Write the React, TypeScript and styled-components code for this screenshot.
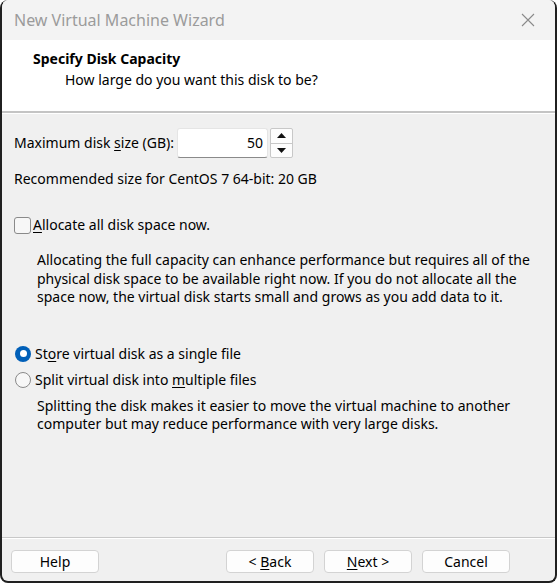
import styled, { createGlobalStyle } from "styled-components";

const Global = createGlobalStyle`
  html, body {
    margin: 0;
    padding: 0;
    background: #ffffff;
  }
  body {
    font-family: "Noto Sans", "Open Sans", sans-serif;
    font-size: 14px;
    color: #000;
  }
`;

const Window = styled.div`
  width: 553px;
  height: 581px;
  display: flex;
  flex-direction: column;
  background: #f0f0f0;
  border: 2px solid #202020;
  border-top: none;
  border-radius: 8px;
  overflow: hidden;
`;

const TitleBar = styled.div`
  height: 40px;
  flex: none;
  display: flex;
  align-items: center;
  justify-content: space-between;
  padding: 0 0 0 12px;
  background: #f3f3f3;
  color: #9b9b9b;
  font-size: 16px;
`;

const CloseBtn = styled.div`
  width: 46px;
  height: 40px;
  display: flex;
  align-items: center;
  justify-content: center;
  margin-right: 4px;
`;

const Header = styled.div`
  height: 73px;
  flex: none;
  background: #fff;
  border-bottom: 2px solid #c4c4c4;
  padding: 10px 0 0 31px;
  box-sizing: border-box;
`;

const HeadTitle = styled.div`
  font-weight: 700;
  font-size: 14px;
  line-height: 18px;
`;

const HeadSub = styled.div`
  margin: 3px 0 0 32px;
  line-height: 18px;
`;

const Content = styled.div`
  flex: 1;
  padding: 14px 12px 0 12px;
  display: flex;
  flex-direction: column;
  border-top: 1px solid #fff;
`;

const Row = styled.div<{ $mt?: number }>`
  display: flex;
  align-items: center;
  margin-top: ${(p) => p.$mt ?? 0}px;
  line-height: 18px;
`;

const Label = styled.span`
  width: 163px;
`;

const Spin = styled.div`
  display: flex;
  align-items: stretch;
  height: 30px;
`;

const NumBox = styled.div`
  width: 91px;
  box-sizing: border-box;
  background: #fff;
  border: 1px solid #e5e5e5;
  border-bottom: 1px solid #8a8a8a;
  border-radius: 3px;
  text-align: right;
  padding: 5px 4px 0 0;
`;

const Arrows = styled.div`
  display: flex;
  flex-direction: column;
  margin-left: 2px;
  width: 21px;
  border: 1px solid #c8c8c8;
  border-radius: 2px;
  background: #fdfdfd;
`;

const ArrowBtn = styled.div<{ $top?: boolean }>`
  flex: 1;
  display: flex;
  align-items: center;
  justify-content: center;
  border-bottom: ${(p) => (p.$top ? "1px solid #c8c8c8" : "none")};
`;

const Para = styled.div<{ $mt?: number }>`
  margin: ${(p) => p.$mt ?? 0}px 0 0 23px;
  line-height: 18.5px;
`;

const Check = styled.span`
  width: 15px;
  height: 15px;
  border: 1px solid #8a8a8a;
  border-radius: 3px;
  background: #f7f7f7;
  margin-right: 2px;
  flex: none;
`;

const Radio = styled.span<{ $on?: boolean }>`
  width: 16px;
  height: 16px;
  box-sizing: border-box;
  border-radius: 50%;
  flex: none;
  margin-right: 4px;
  margin-left: 1px;
  ${(p) =>
    p.$on
      ? `background: #005fb8; display:flex; align-items:center; justify-content:center;`
      : `border: 1px solid #8a8a8a; background: #f7f7f7;`}
`;

const Dot = styled.span`
  width: 7px;
  height: 7px;
  border-radius: 50%;
  background: #fff;
`;

const Footer = styled.div`
  flex: none;
  height: 44px;
  border-top: 1px solid #c8c8c8;
  box-shadow: inset 0 1px 0 #fff;
  display: flex;
  align-items: flex-start;
  padding: 12px 0 0 9px;
  box-sizing: border-box;
`;

const Button = styled.div<{ $ml?: number }>`
  width: 88px;
  height: 23px;
  box-sizing: border-box;
  margin-left: ${(p) => p.$ml ?? 0}px;
  background: #fdfdfd;
  border: 1px solid #d3d3d3;
  border-radius: 4px;
  display: flex;
  align-items: center;
  justify-content: center;
  font-size: 14px;
`;

const U = styled.span`
  text-decoration: underline;
  text-underline-offset: 2px;
`;

export default function App() {
  return (
    <>
      <Global />
      <Window>
        <TitleBar>
          <span>New Virtual Machine Wizard</span>
          <CloseBtn>
            <svg width="14" height="14" viewBox="0 0 14 14">
              <path d="M1 1L13 13M13 1L1 13" stroke="#8a8a8a" strokeWidth="1.1" />
            </svg>
          </CloseBtn>
        </TitleBar>
        <Header>
          <HeadTitle>Specify Disk Capacity</HeadTitle>
          <HeadSub>How large do you want this disk to be?</HeadSub>
        </Header>
        <Content>
          <Row>
            <Label>
              Maximum disk <U>s</U>ize (GB):
            </Label>
            <Spin>
              <NumBox>50</NumBox>
              <Arrows>
                <ArrowBtn $top>
                  <svg width="9" height="5" viewBox="0 0 9 5">
                    <path d="M0 5L4.5 0L9 5Z" fill="#111" />
                  </svg>
                </ArrowBtn>
                <ArrowBtn>
                  <svg width="9" height="5" viewBox="0 0 9 5">
                    <path d="M0 0L4.5 5L9 0Z" fill="#111" />
                  </svg>
                </ArrowBtn>
              </Arrows>
            </Spin>
          </Row>
          <Row $mt={12}>Recommended size for CentOS 7 64-bit: 20 GB</Row>
          <Row $mt={28}>
            <Check />
            <span>
              <U>A</U>llocate all disk space now.
            </span>
          </Row>
          <Para $mt={17}>
            Allocating the full capacity can enhance performance but requires all of the
            physical disk space to be available right now. If you do not allocate all the
            space now, the virtual disk starts small and grows as you add data to it.
          </Para>
          <Row $mt={38}>
            <Radio $on>
              <Dot />
            </Radio>
            <span>
              St<U>o</U>re virtual disk as a single file
            </span>
          </Row>
          <Row $mt={8}>
            <Radio />
            <span>
              Split virtual disk into <U>m</U>ultiple files
            </span>
          </Row>
          <Para $mt={8}>
            Splitting the disk makes it easier to move the virtual machine to another
            computer but may reduce performance with very large disks.
          </Para>
        </Content>
        <Footer>
          <Button>Help</Button>
          <Button $ml={127}>
            <span>
              &lt; <U>B</U>ack
            </span>
          </Button>
          <Button $ml={10}>
            <span>
              <U>N</U>ext &gt;
            </span>
          </Button>
          <Button $ml={10}>Cancel</Button>
        </Footer>
      </Window>
    </>
  );
}
